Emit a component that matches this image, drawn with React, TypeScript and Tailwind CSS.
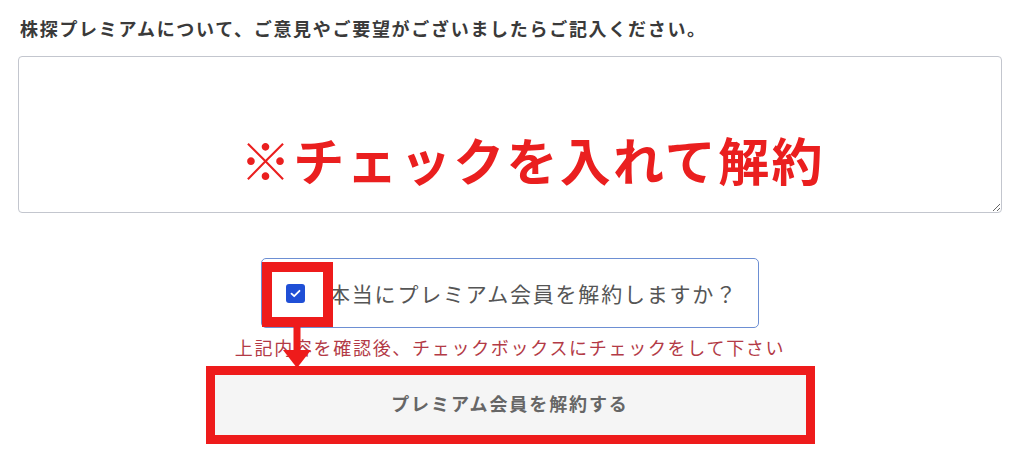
import React from "react";

export default function App() {
  return (
    <div className="w-[1024px] h-[456px] bg-white overflow-hidden font-['Noto_Sans_CJK_JP','Noto_Sans',sans-serif]">
      <h2 className="pl-[20px] pt-[17px] text-[18px] leading-[22px] font-bold text-[#3a3a3a] tracking-[1.7px]">
        株探プレミアムについて、ご意見やご要望がございましたらご記入ください。
      </h2>
      <div className="ml-[18px] w-[984px] mt-[17px] flex flex-col items-center">
        <div className="relative w-full h-[157px]">
          <textarea className="w-full h-full border border-[#c3c6ce] rounded-[4px] bg-white outline-none block" />
          <div className="absolute left-[222px] top-[73px] text-[51px] leading-[60px] font-bold text-[#ea1f1f] tracking-[2.3px] whitespace-nowrap pointer-events-none">
            ※チェックを入れて解約
          </div>
        </div>

        <div className="relative mt-[45px] w-[498px] h-[70px] border border-[#6d8fd3] rounded-[5px] flex items-center pl-[24px]">
          <span className="w-[19px] h-[19px] rounded-[3px] bg-[#1f4fd6] flex items-center justify-center">
            <svg width="11" height="9" viewBox="0 0 11 9" fill="none">
              <path d="M1.5 4.6 L4.2 7.2 L9.5 1.8" stroke="white" strokeWidth="1.8" strokeLinecap="round" strokeLinejoin="round" />
            </svg>
          </span>
          <span className="ml-[24px] text-[21px] leading-[28px] text-[#555] tracking-[1.8px] whitespace-nowrap">
            本当にプレミアム会員を解約しますか？
          </span>
          <div className="absolute left-[0px] top-[3px] w-[71px] h-[65px] border-[10px] border-[#ee1b1b]" />
          <svg className="absolute left-[21px] top-[67px]" width="28" height="42" viewBox="0 0 28 42">
            <rect x="10.5" y="0" width="7" height="26" fill="#ee1b1b" />
            <polygon points="0,24 28,24 14,42" fill="#ee1b1b" />
          </svg>
        </div>

        <p className="mt-[7px] text-[18px] leading-[24px] text-[#b33a46] tracking-[1.7px] whitespace-nowrap">
          上記内容を確認後、チェックボックスにチェックをして下さい
        </p>

        <div className="mt-[7px] w-[609px] h-[78px] border-[9px] border-[#ee1b1b] bg-[#f5f5f5] flex items-center justify-center pb-[4px]">
          <span className="text-[18px] leading-[24px] font-bold text-[#666] tracking-[1.9px]">
            プレミアム会員を解約する
          </span>
        </div>
      </div>
    </div>
  );
}
